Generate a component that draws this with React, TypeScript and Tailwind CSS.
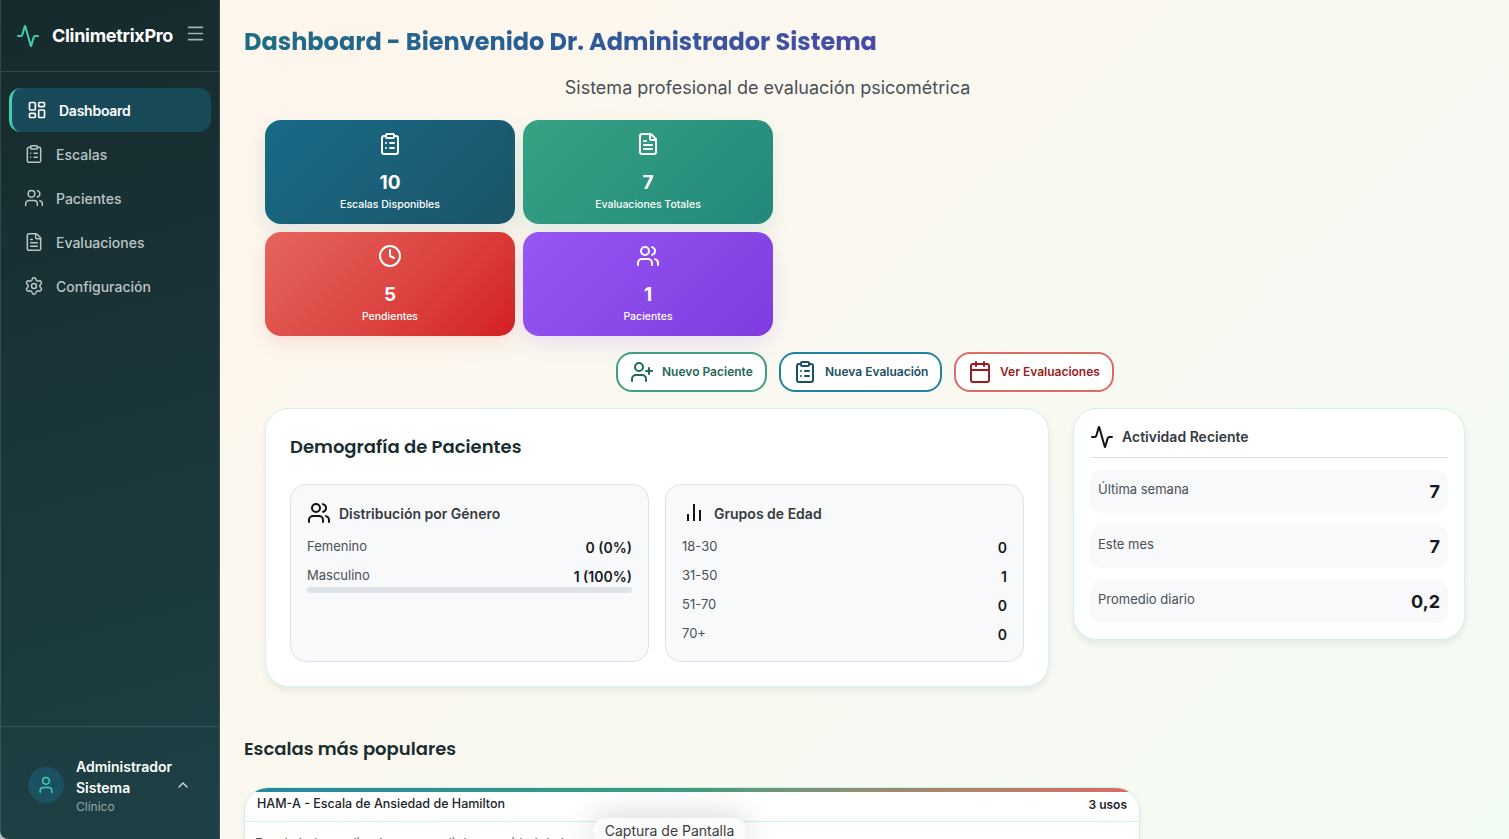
import React from 'react';
import {
  Activity,
  Calendar,
  ChevronUp,
  ClipboardList,
  Clock,
  FileText,
  LayoutDashboard,
  Menu,
  Settings,
  User,
  UserPlus,
  Users,
} from 'lucide-react';

const navItems = [
  { label: 'Escalas', icon: ClipboardList },
  { label: 'Pacientes', icon: Users },
  { label: 'Evaluaciones', icon: FileText },
  { label: 'Configuración', icon: Settings },
];

const stats = [
  {
    value: '10',
    label: 'Escalas Disponibles',
    icon: ClipboardList,
    look: 'bg-linear-135 from-[#176b87] to-[#1b5468] shadow-[0_8px_20px_rgba(23,107,135,0.13)]',
  },
  {
    value: '7',
    label: 'Evaluaciones Totales',
    icon: FileText,
    look: 'bg-linear-135 from-[#36a283] to-[#22897b] shadow-[0_8px_20px_rgba(42,157,143,0.13)]',
  },
  {
    value: '5',
    label: 'Pendientes',
    icon: Clock,
    look: 'bg-linear-135 from-[#e5645e] to-[#d41d24] shadow-[0_8px_20px_rgba(229,100,94,0.15)]',
  },
  {
    value: '1',
    label: 'Pacientes',
    icon: Users,
    look: 'bg-linear-135 from-[#9757f3] to-[#7f3be0] shadow-[0_8px_20px_rgba(139,92,246,0.15)]',
  },
];

const actions = [
  { label: 'Nuevo Paciente', icon: UserPlus, look: 'w-[151px] border-[#3f9f7f] text-[#1f6a57]' },
  { label: 'Nueva Evaluación', icon: ClipboardList, look: 'w-[163px] border-[#2283a0] text-[#1b4f63]' },
  { label: 'Ver Evaluaciones', icon: Calendar, look: 'w-[160px] border-[#dd6b66] text-[#9b1c20]' },
];

const ages = [
  ['18-30', '0'],
  ['31-50', '1'],
  ['51-70', '0'],
  ['70+', '0'],
];

const activity = [
  ['Última semana', '7'],
  ['Este mes', '7'],
  ['Promedio diario', '0,2'],
];

function BarsIcon() {
  return (
    <svg width="24" height="24" viewBox="0 0 24 24" fill="none" stroke="currentColor" strokeWidth="2">
      <path d="M18 20V9M12 20V3M6 20v-7" />
    </svg>
  );
}

function Row({ label, value }: { label: string; value: string }) {
  return (
    <div className="flex h-[29px] items-start justify-between">
      <span className="text-[13px] leading-[21px] text-[#495057]">{label}</span>
      <span className="pt-px text-[14px] leading-[22px] font-semibold text-[#16191d]">{value}</span>
    </div>
  );
}

function Sidebar() {
  return (
    <aside className="flex h-full w-[220px] shrink-0 flex-col overflow-hidden rounded-bl-[8px] border-x border-white/12 bg-linear-165 from-[#162a2d] to-[#1e4145]">
      <div className="flex h-[72px] items-center border-b border-white/12 pl-[15px]">
        <Activity size={24} className="text-[#41cdb0]" />
        <span className="ml-3 w-[125px] text-[18px] font-bold tracking-[-0.3px] text-white">ClinimetrixPro</span>
        <Menu size={21} strokeWidth={1.8} className="mb-1 ml-2 text-[#a3afb1]" />
      </div>
      <nav className="flex flex-col px-2 pt-4">
        <div className="flex h-11 items-center gap-3 rounded-xl border-l-3 border-[#3fcfb0] bg-linear-135 from-[#194a5b] to-[#184956] pl-[15px] text-[14px] font-semibold tracking-[-0.25px] text-white">
          <LayoutDashboard size={20} />
          Dashboard
        </div>
        {navItems.map(({ label, icon: Icon }) => (
          <div key={label} className="flex h-11 items-center gap-3 pl-[15px] text-[14px] font-medium text-[#bcc5c6]">
            <Icon size={20} strokeWidth={1.8} />
            {label}
          </div>
        ))}
      </nav>
      <div className="mt-auto flex h-[113px] items-center border-t border-white/12 pt-1 pl-[27px]">
        <div className="flex size-9 items-center justify-center rounded-full bg-[#1b5161] text-[#3fcfb0]">
          <User size={20} strokeWidth={1.8} />
        </div>
        <div className="ml-3 w-[96px]">
          <div className="text-[14px] leading-[21px] font-semibold text-white">Administrador Sistema</div>
          <div className="text-[12px] leading-[17px] text-[#97a6a8]">Clínico</div>
        </div>
        <ChevronUp size={16} className="ml-[3px] text-[#d5dcdd]" />
      </div>
    </aside>
  );
}

export default function App() {
  return (
    <div className="relative flex h-[839px] w-[1509px] overflow-hidden bg-[#b9c0c0] font-[Inter,sans-serif]">
      <Sidebar />
      <main className="flex h-full min-w-0 flex-1 flex-col bg-linear-135 from-[#fff6ec] to-[#f3fbf5] pt-6 pl-6">
        <h1 className="w-fit bg-linear-135 from-[#1b6f85] via-[#2a5c97] to-[#484aa9] bg-clip-text font-[Poppins,Inter,sans-serif] text-[24px] leading-[36px] font-bold whitespace-nowrap text-transparent">
          Dashboard - Bienvenido Dr. Administrador Sistema
        </h1>
        <p className="mt-[13px] w-[1047px] text-center text-[18px] leading-[29px] text-[#495057]">
          Sistema profesional de evaluación psicométrica
        </p>

        <section className="mt-[18px] ml-[21px] grid w-[508px] grid-cols-2 gap-2">
          {stats.map(({ value, label, icon: Icon, look }) => (
            <div key={label} className={'flex h-[104px] flex-col items-center rounded-2xl pt-3 text-white ' + look}>
              <Icon size={24} />
              <div className="mt-[15px] text-[19px] leading-[24px] font-bold">{value}</div>
              <div className="mt-[2px] text-[10.5px] leading-[15px] font-medium">{label}</div>
            </div>
          ))}
        </section>

        <section className="mt-4 ml-[21px] flex w-[1200px] justify-center gap-3">
          {actions.map(({ label, icon: Icon, look }) => (
            <div
              key={label}
              className={'flex h-10 items-center gap-2 rounded-2xl border-2 bg-white pl-3 text-[12px] font-semibold whitespace-nowrap ' + look}
            >
              <Icon size={24} />
              {label}
            </div>
          ))}
        </section>

        <section className="mt-4 ml-[21px] flex items-start gap-6">
          <div className="h-[279px] w-[784px] rounded-3xl border border-[#d2f3ea] bg-white px-6 pt-6 shadow-[0_4px_6px_rgba(0,40,40,0.07)]">
            <h2 className="font-[Poppins,Inter,sans-serif] text-[18px] leading-[27px] font-semibold text-[#1a2e30]">
              Demografía de Pacientes
            </h2>
            <div className="mt-6 grid grid-cols-2 gap-4">
              <div className="h-[178px] rounded-2xl border border-[#dee2e6] bg-[#f8f9fb] p-4">
                <div className="flex items-center gap-2 text-[14px] font-semibold text-[#343a40]">
                  <Users size={24} className="text-[#101418]" />
                  Distribución por Género
                </div>
                <div className="pt-[11px]">
                  <Row label="Femenino" value="0 (0%)" />
                  <Row label="Masculino" value="1 (100%)" />
                </div>
                <div className="-mt-[7px] h-[6px] rounded-full bg-[#dfe3e7]" />
              </div>
              <div className="h-[178px] rounded-2xl border border-[#dee2e6] bg-[#f8f9fb] p-4">
                <div className="flex items-center gap-2 text-[14px] font-semibold text-[#343a40]">
                  <span className="text-[#101418]">
                    <BarsIcon />
                  </span>
                  Grupos de Edad
                </div>
                <div className="pt-[11px]">
                  {ages.map(([label, value]) => (
                    <Row key={label} label={label} value={value} />
                  ))}
                </div>
              </div>
            </div>
          </div>

          <div className="h-[232px] w-[392px] rounded-3xl border border-[#d2f3ea] bg-white px-4 pt-4 shadow-[0_4px_6px_rgba(0,40,40,0.07)]">
            <div className="flex h-[33px] items-start gap-2 border-b border-[#dee2e6] text-[14px] leading-6 font-semibold text-[#343a40]">
              <Activity size={24} className="text-[#101418]" />
              Actividad Reciente
            </div>
            <div className="mt-3 flex flex-col gap-3">
              {activity.map(([label, value]) => (
                <div key={label} className="flex h-[43px] items-center justify-between rounded-xl bg-[#f8f9fb] px-2">
                  <span className="pb-[3px] text-[13px] text-[#495057]">{label}</span>
                  <span className="text-[18px] font-bold text-[#16191d]">{value}</span>
                </div>
              ))}
            </div>
          </div>
        </section>

        <h2 className="mt-12 font-[Poppins,Inter,sans-serif] text-[18px] leading-[27px] font-semibold text-[#1a2e30]">
          Escalas más populares
        </h2>
        <section className="mt-[25px] h-[160px] w-[896px] shrink-0 overflow-hidden rounded-3xl border border-[#c9f2e8] bg-white shadow-[0_4px_6px_rgba(0,40,40,0.07)]">
          <div className="h-1 bg-linear-to-r from-[#2587a0] via-[#3f9c7d] to-[#dc6862]" />
          <div className="flex h-[30px] items-center justify-between border-b border-[#c9f2e8] px-3 pb-1 text-[12.5px] font-medium text-[#1a2528]">
            <span>HAM-A - Escala de Ansiedad de Hamilton</span>
            <span className="text-[12px] font-semibold">3 usos</span>
          </div>
          <p className="px-[10px] pt-[11px] text-[13px] leading-[20px] text-[#495057]">
            Escala heteroaplicada para medir la severidad de la ansiedad
          </p>
        </section>
      </main>

      <div className="absolute top-[818px] left-[593px] flex h-[26px] w-[153px] justify-center rounded-xl bg-[#fafbfa] text-[14px] leading-[26px] whitespace-nowrap text-[#3c3c3c] shadow-[0_0_32px_rgba(0,0,0,0.2)]">
        Captura de Pantalla
      </div>
    </div>
  );
}
